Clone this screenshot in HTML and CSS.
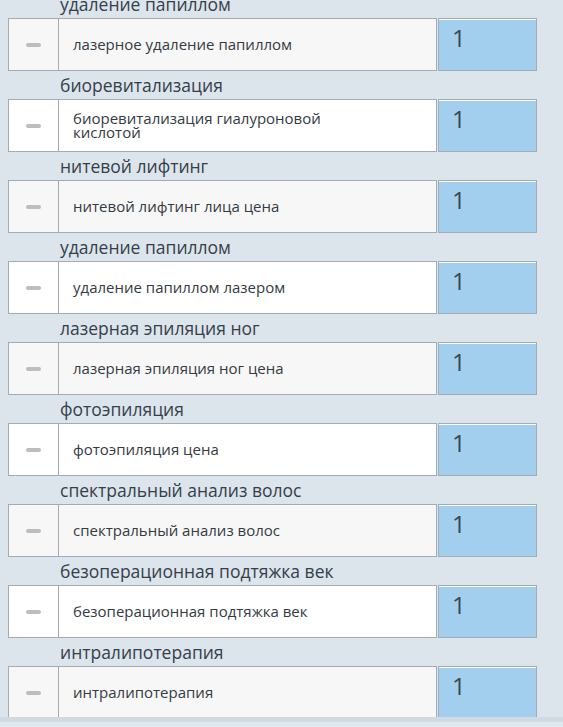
FILE: index.html
```html
<!DOCTYPE html>
<html lang="ru">
<head>
<meta charset="utf-8">
<link rel="stylesheet" href="styles.css">
</head>
<body>
<div class="list">
  <div class="group">
    <div class="label">удаление папиллом</div>
    <div class="row odd"><div class="box"><div class="minus"><span></span></div><div class="txt"><span>лазерное удаление папиллом</span></div></div><div class="num">1</div></div>
  </div>
  <div class="group">
    <div class="label">биоревитализация</div>
    <div class="row"><div class="box"><div class="minus"><span></span></div><div class="txt"><span>биоревитализация гиалуроновой кислотой</span></div></div><div class="num">1</div></div>
  </div>
  <div class="group">
    <div class="label">нитевой лифтинг</div>
    <div class="row odd"><div class="box"><div class="minus"><span></span></div><div class="txt"><span>нитевой лифтинг лица цена</span></div></div><div class="num">1</div></div>
  </div>
  <div class="group">
    <div class="label">удаление папиллом</div>
    <div class="row"><div class="box"><div class="minus"><span></span></div><div class="txt"><span>удаление папиллом лазером</span></div></div><div class="num">1</div></div>
  </div>
  <div class="group">
    <div class="label">лазерная эпиляция ног</div>
    <div class="row odd"><div class="box"><div class="minus"><span></span></div><div class="txt"><span>лазерная эпиляция ног цена</span></div></div><div class="num">1</div></div>
  </div>
  <div class="group">
    <div class="label">фотоэпиляция</div>
    <div class="row"><div class="box"><div class="minus"><span></span></div><div class="txt"><span>фотоэпиляция цена</span></div></div><div class="num">1</div></div>
  </div>
  <div class="group">
    <div class="label">спектральный анализ волос</div>
    <div class="row odd"><div class="box"><div class="minus"><span></span></div><div class="txt"><span>спектральный анализ волос</span></div></div><div class="num">1</div></div>
  </div>
  <div class="group">
    <div class="label">безоперационная подтяжка век</div>
    <div class="row"><div class="box"><div class="minus"><span></span></div><div class="txt"><span>безоперационная подтяжка век</span></div></div><div class="num">1</div></div>
  </div>
  <div class="group">
    <div class="label">интралипотерапия</div>
    <div class="row odd"><div class="box"><div class="minus"><span></span></div><div class="txt"><span>интралипотерапия</span></div></div><div class="num">1</div></div>
  </div>
</div>
<div class="footer"></div>
</body>
</html>
```
FILE: styles.css
```css
html, body {
  margin: 0;
  padding: 0;
  background: #dce4ec;
  overflow: hidden;
  height: 727px;
}
body {
  font-family: "Open Sans", "DejaVu Sans", sans-serif;
}
.list {
  margin-top: -10px;
  padding-left: 8px;
}
.label {
  padding: 3px 0 2px 52px;
  height: 23px;
  line-height: 23px;
  font-size: 17.5px;
  color: #353f4a;
  white-space: nowrap;
}
.row {
  display: flex;
  height: 53px;
}
.box {
  display: flex;
  width: 427px;
  border: 1px solid #a3acb5;
  background: #ffffff;
}
.row.odd .box {
  background: #f7f7f7;
}
.minus {
  width: 50px;
  border-right: 1px solid #a3acb5;
  display: flex;
  align-items: center;
  padding-left: 17px;
  box-sizing: border-box;
}
.minus span {
  display: block;
  width: 15px;
  height: 4px;
  border-radius: 2px;
  background: #bdbdbd;
  margin-top: 1px;
}
.txt {
  flex: 1;
  display: flex;
  align-items: center;
  padding: 0 0 1px 14px;
  font-size: 15px;
  line-height: 14px;
  color: #343b42;
}
.txt span {
  max-width: 275px;
}
.num {
  margin-left: 1px;
  border: 1px solid #a3acb5;
  background: #a3cfee;
  box-shadow: inset 0 1px 0 #ffffff;
  font-size: 24px;
  line-height: 32px;
  padding: 3px 0 0 13px;
  box-sizing: border-box;
  width: 99px;
  color: #3b4652;
  font-weight: 400;
}
.footer {
  position: fixed;
  left: 0;
  right: 0;
  bottom: 0;
  height: 10px;
  background: linear-gradient(#cfdae2 0, #cfdae2 5px, #dfe8ef 5px);
}
```
